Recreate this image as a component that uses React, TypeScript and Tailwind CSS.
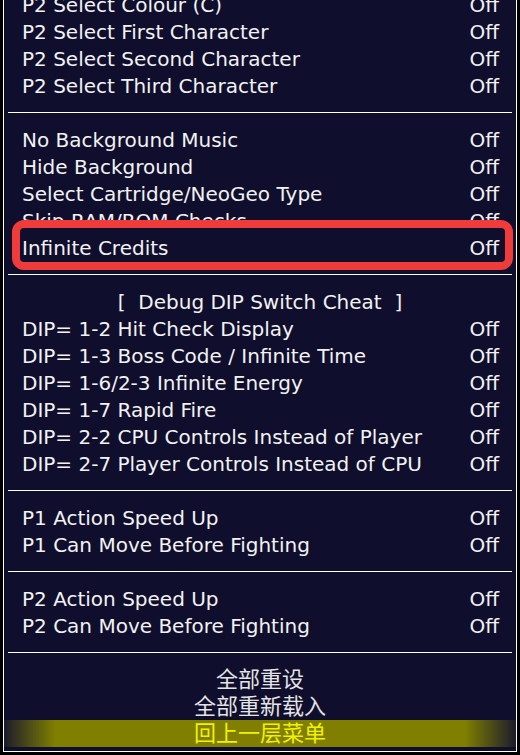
type Item = { label: string; value?: string }

const groups: Item[][] = [
  [
    { label: 'P2 Select Colour (C)', value: 'Off' },
    { label: 'P2 Select First Character', value: 'Off' },
    { label: 'P2 Select Second Character', value: 'Off' },
    { label: 'P2 Select Third Character', value: 'Off' },
  ],
  [
    { label: 'No Background Music', value: 'Off' },
    { label: 'Hide Background', value: 'Off' },
    { label: 'Select Cartridge/NeoGeo Type', value: 'Off' },
    { label: 'Skip RAM/ROM Checks', value: 'Off' },
    { label: 'Infinite Credits', value: 'Off' },
  ],
  [
    { label: '[  Debug DIP Switch Cheat  ]' },
    { label: 'DIP= 1-2 Hit Check Display', value: 'Off' },
    { label: 'DIP= 1-3 Boss Code / Infinite Time', value: 'Off' },
    { label: 'DIP= 1-6/2-3 Infinite Energy', value: 'Off' },
    { label: 'DIP= 1-7 Rapid Fire', value: 'Off' },
    { label: 'DIP= 2-2 CPU Controls Instead of Player', value: 'Off' },
    { label: 'DIP= 2-7 Player Controls Instead of CPU', value: 'Off' },
  ],
  [
    { label: 'P1 Action Speed Up', value: 'Off' },
    { label: 'P1 Can Move Before Fighting', value: 'Off' },
  ],
  [
    { label: 'P2 Action Speed Up', value: 'Off' },
    { label: 'P2 Can Move Before Fighting', value: 'Off' },
  ],
]

function Row({ item }: { item: Item }) {
  const marked = item.label === 'Infinite Credits'

  if (!item.value) {
    return (
      <div className="h-[27px] flex items-center justify-center whitespace-pre">
        {item.label}
      </div>
    )
  }

  return (
    <div className="relative h-[27px]">
      {marked && (
        <div className="absolute left-[8px] right-[3px] top-[-14px] bottom-[-9px] rounded-[12px] border-[8px] border-[#f03b3b] bg-[#100e2d]" />
      )}
      <div className="relative flex h-full items-center justify-between pl-[18px] pr-[17px]">
        <span>{item.label}</span>
        <span>{item.value}</span>
      </div>
    </div>
  )
}

function Divider() {
  return (
    <div className="h-[27px] flex items-center px-[4px]">
      <div className="h-px w-full bg-white" />
    </div>
  )
}

export default function App() {
  return (
    <div className="h-[755px] w-[520px] overflow-hidden bg-black">
      <div
        className="ml-[3px] h-[752px] w-[514px] overflow-hidden border-x border-b border-white bg-[#100e2d] text-[20px] text-[#f2f2f2]"
        style={{ fontFamily: '"DejaVu Sans", sans-serif' }}
      >
        <div className="-mt-[9px]">
          {groups.map((group, i) => (
            <div key={i}>
              {i > 0 && <Divider />}
              {group.map((item) => (
                <Row key={item.label} item={item} />
              ))}
            </div>
          ))}
          <Divider />
          <div
            className="text-[22px] leading-[27px]"
            style={{ fontFamily: '"Noto Sans CJK SC", sans-serif' }}
          >
            <div className="h-[27px] overflow-hidden text-center text-[#e4e4e4]">
              <span className="relative -top-[2px]">全部重设</span>
            </div>
            <div className="h-[27px] overflow-hidden text-center text-[#e4e4e4]">
              <span className="relative -top-[2px]">全部重新载入</span>
            </div>
            <div className="h-[27px] overflow-hidden text-center bg-[linear-gradient(90deg,#1c1b2c_0%,#807f00_10%,#807f00_90%,#1c1b2c_100%)] text-[#f2f200]">
              <span className="relative -top-[2px]">回上一层菜单</span>
            </div>
          </div>
        </div>
      </div>
    </div>
  )
}
